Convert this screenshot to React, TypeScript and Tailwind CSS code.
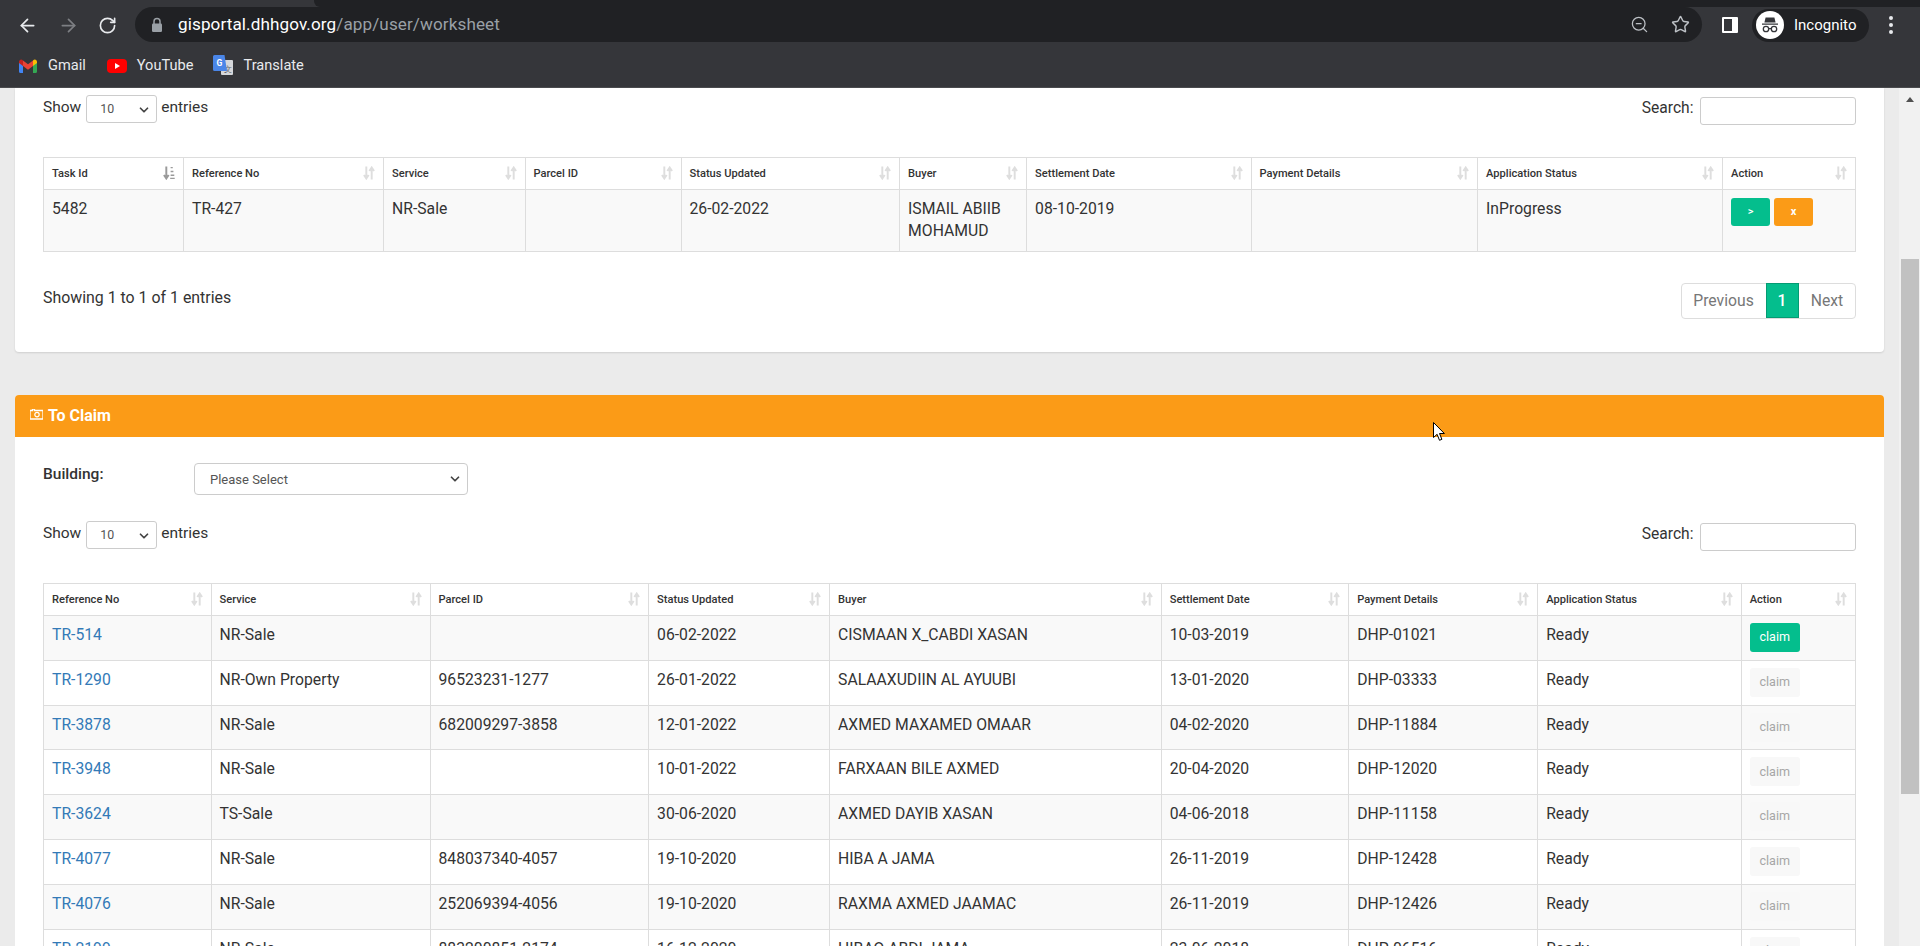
import { ArrowLeft, ArrowRight, ChevronDown, RotateCw, Star, ZoomOut } from "lucide-react";

const Sort = ({ active = false }: { active?: boolean }) => (
  <svg width="12" height="14" viewBox="0 0 11 13" className="shrink-0 -mt-[2px]">
    <path d="M3 0.5v10.5M0.8 8.4 3 11.6l2.2-3.2" fill="none" strokeWidth="1.8" stroke={active ? "#9a9a9a" : "#dedede"} />
    {active ? (
      <path d="M7 1h2v1.2H7zM7 4.5h2.6v1.3H7zM7 8h3.4v1.4H7zM6.6 10.8h4.2V12H6.6z" fill="#9a9a9a" />
    ) : (
      <path d="M8 12.5V2M5.8 4.6 8 1.4l2.2 3.2" fill="none" strokeWidth="1.8" stroke="#dedede" />
    )}
  </svg>
);

const Head = ({ label, active }: { label: string; active?: boolean }) => (
  <th className="border border-[#ddd] px-2 h-[32px] text-left font-medium text-[11.1px] text-[#333] align-middle">
    <div className="flex items-center justify-between pt-[1px]">
      <span>{label}</span>
      <Sort active={active} />
    </div>
  </th>
);

const Cell = ({ children }: { children?: React.ReactNode }) => (
  <td className="border border-[#ddd] px-2 pt-[8px] align-top">{children}</td>
);

const ShowEntries = () => (
  <label className="flex items-start gap-[4px] text-[15.5px] leading-[22px] text-[#333]">
    <span className="mr-[1px] mt-[1px]">Show</span>
    <span className="relative flex">
      <select className="appearance-none w-[71px] h-[28px] border border-[#ccc] rounded-[3px] bg-white pl-[13px] text-[12.4px] text-[#555]">
        <option>10</option>
      </select>
      <ChevronDown size={14} strokeWidth={3} className="absolute right-[6px] top-[8px] text-[#444]" />
    </span>
    <span className="mt-[1px]">entries</span>
  </label>
);

const SearchBox = () => (
  <label className="flex items-start gap-[6px] mt-[2px] text-[15.6px] leading-[22px] text-[#333]">
    <span>Search:</span>
    <input className="w-[156px] h-[28px] border border-[#ccc] rounded-[3px] bg-white" />
  </label>
);

const taskHeads = ["Task Id", "Reference No", "Service", "Parcel ID", "Status Updated", "Buyer", "Settlement Date", "Payment Details", "Application Status", "Action"];
const taskCols = ["w-[140px]", "w-[200px]", "w-[141.5px]", "w-[156px]", "w-[218.6px]", "w-[127px]", "w-[224.5px]", "w-[226.5px]", "w-[245px]", "w-[133px]"];

const claimHeads = ["Reference No", "Service", "Parcel ID", "Status Updated", "Buyer", "Settlement Date", "Payment Details", "Application Status", "Action"];
const claimCols = ["w-[167.5px]", "w-[219px]", "w-[218.6px]", "w-[181px]", "w-[331.6px]", "w-[187.5px]", "w-[189px]", "w-[203.5px]", "w-[114.5px]"];

const claimRows = [
  ["TR-514", "NR-Sale", "", "06-02-2022", "CISMAAN X_CABDI XASAN", "10-03-2019", "DHP-01021"],
  ["TR-1290", "NR-Own Property", "96523231-1277", "26-01-2022", "SALAAXUDIIN AL AYUUBI", "13-01-2020", "DHP-03333"],
  ["TR-3878", "NR-Sale", "682009297-3858", "12-01-2022", "AXMED MAXAMED OMAAR", "04-02-2020", "DHP-11884"],
  ["TR-3948", "NR-Sale", "", "10-01-2022", "FARXAAN BILE AXMED", "20-04-2020", "DHP-12020"],
  ["TR-3624", "TS-Sale", "", "30-06-2020", "AXMED DAYIB XASAN", "04-06-2018", "DHP-11158"],
  ["TR-4077", "NR-Sale", "848037340-4057", "19-10-2020", "HIBA A JAMA", "26-11-2019", "DHP-12428"],
  ["TR-4076", "NR-Sale", "252069394-4056", "19-10-2020", "RAXMA AXMED JAAMAC", "26-11-2019", "DHP-12426"],
  ["TR-2199", "NR-Sale", "883200851-2174", "16-12-2020", "HIBAQ ABDI JAMA", "23-06-2018", "DHP-06516"],
];

const BrowserBar = () => (
  <header className="h-[88px] shrink-0 bg-[#35363a] border-b border-[#4a4b4e] text-white flex flex-col">
    <div className="h-[7px] flex">
      <div className="w-[314px] bg-[#35363a]" />
      <div className="flex-1 bg-[#202124] rounded-bl-[6px]" />
    </div>
    <div className="h-[36px] flex items-center">
      <ArrowLeft size={21} strokeWidth={2} className="ml-[17px] text-[#e8eaed]" />
      <ArrowRight size={21} strokeWidth={2} className="ml-[20px] text-[#7d7f83]" />
      <RotateCw size={19} strokeWidth={2.1} className="ml-[19px] text-[#e8eaed]" />
      <div className="ml-[18px] w-[1567px] h-[35px] -mt-[1px] rounded-full bg-[#202124] flex items-center">
        <svg width="12" height="16" viewBox="0 0 12 16" className="ml-[16px]">
          <path d="M3 7V4.5a3 3 0 0 1 6 0V7" fill="none" stroke="#9aa0a6" strokeWidth="1.5" />
          <rect x="1" y="6.5" width="10" height="8.5" rx="1.2" fill="#9aa0a6" />
        </svg>
        <span className="ml-[15px] pt-[1px] text-[17.1px] tracking-[0.1px] whitespace-nowrap">
          gisportal.dhhgov.org<span className="text-[#9aa0a6]">/app/user/worksheet</span>
        </span>
        <ZoomOut size={19} strokeWidth={1.6} className="ml-auto text-[#bdc1c6]" />
        <Star size={19} strokeWidth={1.8} className="ml-[22px] mr-[12px] text-[#bdc1c6]" />
      </div>
      <div className="ml-[20px] w-[16px] h-[16px] border-[2.5px] border-white border-r-[6px] rounded-[1px]" />
      <div className="ml-[14px] w-[117px] h-[33px] rounded-full bg-[#202124] flex items-center pl-[4px]">
        <div className="w-[28px] h-[28px] rounded-full bg-white flex items-center justify-center">
          <svg width="20" height="20" viewBox="0 0 20 20">
            <path d="M5.6 2.5h8.8l1.2 5H4.4zM2 8.4h16v1.4H2z" fill="#35363a" />
            <circle cx="6" cy="14" r="2.7" fill="none" stroke="#35363a" strokeWidth="1.3" />
            <circle cx="14" cy="14" r="2.7" fill="none" stroke="#35363a" strokeWidth="1.3" />
            <path d="M8.7 13.6h2.6" stroke="#35363a" strokeWidth="1.3" />
          </svg>
        </div>
        <span className="ml-[10px] text-[15px]">Incognito</span>
      </div>
      <div className="ml-[20px] flex flex-col gap-[3px]">
        <span className="w-[4px] h-[4px] rounded-full bg-[#e8eaed]" />
        <span className="w-[4px] h-[4px] rounded-full bg-[#e8eaed]" />
        <span className="w-[4px] h-[4px] rounded-full bg-[#e8eaed]" />
      </div>
    </div>
    <div className="flex-1 flex items-center pt-[1px] text-[14.6px] text-[#e8eaed]">
      <svg width="18" height="14" viewBox="0 0 18 14" className="ml-[19px]">
        <path fill="#4285f4" d="M0 3v9.5A1.5 1.5 0 0 0 1.5 14H4V6.5z" />
        <path fill="#34a853" d="M18 3v9.5a1.5 1.5 0 0 1-1.5 1.5H14V6.5z" />
        <path fill="#ea4335" d="M4 7 9 10.7 14 7V1.5L9 5.3 4 1.5z" />
        <path fill="#c5221f" d="M0 3c0-2.4 2.5-3.3 4-1.5V7L0 4z" />
        <path fill="#fbbc04" d="M18 3c0-2.4-2.5-3.3-4-1.5V7l4-3z" />
      </svg>
      <span className="ml-[11px]">Gmail</span>
      <svg width="20" height="14" viewBox="0 0 20 14" className="ml-[21px]">
        <rect width="20" height="14" rx="4" fill="#ff0000" />
        <path d="M8 4v6l5-3z" fill="#fff" />
      </svg>
      <span className="ml-[10px]">YouTube</span>
      <svg width="20" height="21" viewBox="0 0 20 21" className="ml-[20px]">
        <rect x="8" y="5" width="12" height="15" rx="1" fill="#d5d7da" />
        <text x="11" y="17" fontSize="8" fill="#5f6368">文</text>
        <path d="M1.5 0h10L14 16H1.5A1.5 1.5 0 0 1 0 14.5v-13A1.5 1.5 0 0 1 1.5 0z" fill="#4a86e8" />
        <text x="3.5" y="11" fontSize="8.5" fontWeight="700" fill="#fff">G</text>
      </svg>
      <span className="ml-[10px]">Translate</span>
    </div>
  </header>
);

const ScrollTrack = () => (
  <aside className="w-[21px] shrink-0 bg-[#f1f1f1] flex flex-col items-center">
    <div className="mt-[9px] w-0 h-0 border-x-[4.5px] border-x-transparent border-b-[5px] border-b-[#505050]" />
    <div className="mt-[157px] w-[18px] h-[535px] bg-[#c1c1c1]" />
  </aside>
);

export default function App() {
  return (
    <div className="h-[946px] overflow-hidden flex flex-col font-['Roboto',sans-serif]">
      <BrowserBar />
      <div className="flex-1 min-h-0 flex bg-[#ebebeb]">
        <main className="flex-1 min-w-0 overflow-hidden px-[15px]">
          {/* worksheet card, top cut off by the scroll */}
          <section className="h-[264px] bg-white rounded-b-[4px] shadow-[0_1px_2px_rgba(0,0,0,0.12)] pl-[28px] pr-[28.5px] pt-[7px]">
            <div className="flex justify-between">
              <ShowEntries />
              <SearchBox />
            </div>
            <table className="mt-[32px] w-full table-fixed border-collapse text-[15.72px] leading-[22.4px] text-[#333]">
              <colgroup>
                {taskCols.map((c) => (
                  <col key={c} className={c} />
                ))}
              </colgroup>
              <thead>
                <tr>
                  {taskHeads.map((h, i) => (
                    <Head key={h} label={h} active={i === 0} />
                  ))}
                </tr>
              </thead>
              <tbody>
                <tr className="h-[62px] bg-[#f9f9f9]">
                  <Cell>5482</Cell>
                  <Cell>TR-427</Cell>
                  <Cell>NR-Sale</Cell>
                  <Cell />
                  <Cell>26-02-2022</Cell>
                  <Cell>ISMAIL ABIIB MOHAMUD</Cell>
                  <Cell>08-10-2019</Cell>
                  <Cell />
                  <Cell>InProgress</Cell>
                  <td className="border border-[#ddd] px-2 pt-[8px] align-top">
                    <div className="flex gap-[4px]">
                      <button className="w-[39px] h-[28px] rounded-[3px] bg-[#04be8d] text-white text-[11px] font-medium">&gt;</button>
                      <button className="w-[39px] h-[28px] rounded-[3px] bg-[#fb9b17] text-white text-[11px] font-bold">x</button>
                    </div>
                  </td>
                </tr>
              </tbody>
            </table>
            <div className="mt-[31px] flex justify-between items-start">
              <span className="mt-[4px] text-[15.9px] leading-[22px] text-[#333]">Showing 1 to 1 of 1 entries</span>
              <nav className="flex h-[36px] pb-[1px] text-[15.72px] text-[#777] border border-[#ddd] rounded-[4px]">
                <span className="w-[84px] flex items-center justify-center">Previous</span>
                <span className="w-[33px] -my-px flex items-center justify-center bg-[#04be8d] border border-[#049b73] text-white font-medium">1</span>
                <span className="flex-1 w-[56px] pl-[1px] flex items-center justify-center">Next</span>
              </nav>
            </div>
          </section>

          <section className="mt-[43px] bg-white rounded-t-[4px]">
            <div className="relative h-[42px] rounded-t-[4px] bg-[#fb9b17] flex items-center pl-[15px] text-white text-[16px] font-bold">
              <svg width="13" height="11" viewBox="0 0 13 11" className="-mt-[4px]">
                <path d="M0 1.5h2.5V0h2v1.5H13V10H0z" fill="none" stroke="#fff" strokeWidth="1.3" />
                <circle cx="7" cy="5.6" r="2.2" fill="none" stroke="#fff" strokeWidth="1.2" />
              </svg>
              <span className="ml-[5px]">To Claim</span>
              {/* mouse pointer in the screenshot */}
              <svg width="12" height="20" viewBox="0 0 12 20" className="absolute left-[1418px] top-[27px]">
                <path d="M0.5 0.5v15l3.6-3.2 2.4 6 2.4-1-2.4-5.8h4.9z" fill="#fff" stroke="#000" strokeWidth="1" />
              </svg>
            </div>
            <div className="pl-[28px] pr-[28.5px]">
              <div className="pt-[26px] flex items-start">
                <span className="w-[151px] text-[15.5px] leading-[22px] font-medium text-[#333]">Building:</span>
                <span className="relative flex">
                  <select className="appearance-none w-[274px] h-[32px] pt-[1px] border border-[#ccc] rounded-[4px] bg-white pl-[15px] text-[13px] text-[#555]">
                    <option>Please Select</option>
                  </select>
                  <ChevronDown size={14} strokeWidth={3} className="absolute right-[6px] top-[9px] text-[#444]" />
                </span>
              </div>
              <div className="mt-[26px] flex justify-between">
                <ShowEntries />
                <SearchBox />
              </div>
              <table className="mt-[32px] w-full table-fixed border-collapse text-[15.72px] leading-[22.4px] text-[#333]">
                <colgroup>
                  {claimCols.map((c) => (
                    <col key={c} className={c} />
                  ))}
                </colgroup>
                <thead>
                  <tr>
                    {claimHeads.map((h) => (
                      <Head key={h} label={h} />
                    ))}
                  </tr>
                </thead>
                <tbody>
                  {claimRows.map((r, i) => (
                    <tr key={r[0]} className={i % 2 === 0 ? "h-[44.8px] bg-[#f9f9f9]" : "h-[44.8px] bg-white"}>
                      <Cell>
                        <a className="text-[#337ab7]">{r[0]}</a>
                      </Cell>
                      {r.slice(1).map((v, j) => (
                        <Cell key={j}>{v}</Cell>
                      ))}
                      <Cell>Ready</Cell>
                      <td className="border border-[#ddd] px-2 pt-[7px] align-top">
                        <button
                          className={
                            i === 0
                              ? "w-[50px] h-[29px] rounded-[3px] bg-[#04be8d] text-white text-[12.6px]"
                              : "w-[50px] h-[29px] rounded-[3px] bg-[#f8f8f8] text-[#a6a6a6] text-[12.6px]"
                          }
                        >
                          claim
                        </button>
                      </td>
                    </tr>
                  ))}
                </tbody>
              </table>
            </div>
          </section>
        </main>
        <ScrollTrack />
      </div>
    </div>
  );
}
